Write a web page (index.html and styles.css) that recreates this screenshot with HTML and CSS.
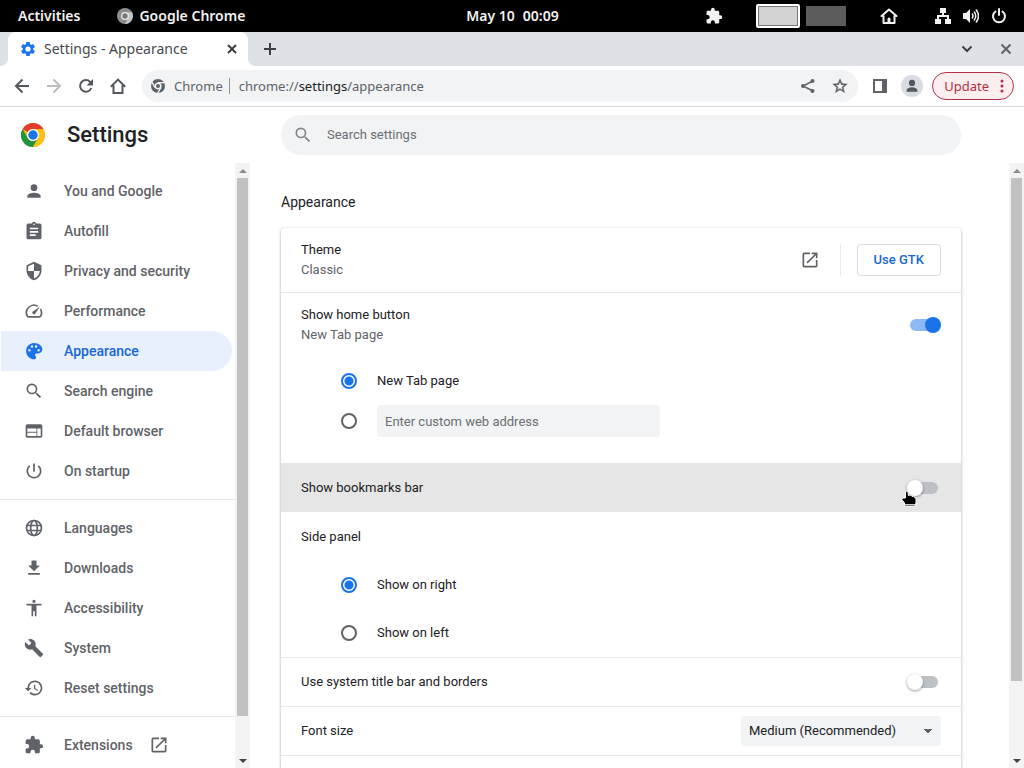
FILE: index.html
```html
<!DOCTYPE html>
<html lang="en">
<head>
<meta charset="utf-8">
<title>Settings - Appearance</title>
<link rel="stylesheet" href="styles.css">
</head>
<body>
<header class="topbar">
  <div class="topbar-left">
    <button class="topbar-btn">Activities</button>
    <button class="topbar-btn topbar-app">
      <svg class="i16" viewBox="0 0 24 24"><circle cx="12" cy="12" r="12" fill="#8e8e8e"/><path d="M12 6.500h10.500A12 12 0 0 1 12 24l5-9z" fill="#c4c4c4"/><path d="M12 24 1.800 6l5.500 9 4.700 3z" fill="#7d7d7d"/><circle cx="12" cy="12" r="6" fill="#e8e8e8"/><circle cx="12" cy="12" r="4" fill="#777"/></svg>
      Google Chrome
    </button>
  </div>
  <time class="clock"><span>May 10</span><span>00:09</span></time>
  <div class="topbar-right">
    <svg class="i18" viewBox="0 0 24 24" fill="currentColor"><path d="M20.500 11H19V7c0-1.100-.9-2-2-2h-4V3.500a2.500 2.500 0 0 0-5 0V5H4c-1.100 0-2 .9-2 2v3.800h1.500a2.700 2.700 0 0 1 0 5.400H2V20c0 1.100.9 2 2 2h3.800v-1.500a2.700 2.700 0 0 1 5.400 0V22H17c1.100 0 2-.9 2-2v-4h1.500a2.500 2.500 0 0 0 0-5z"/></svg>
    <div class="workspaces"><button class="workspace workspace-active" aria-label="Workspace 1"></button><button class="workspace" aria-label="Workspace 2"></button></div>
    <svg class="i18 tray-home" viewBox="0 0 18 18" fill="none" stroke="currentColor" stroke-width="2" stroke-linejoin="round" stroke-linecap="round"><path d="M1.500 9 9 2.500 16.500 9M3.500 9v7h11V9"/><path d="M7.500 16v-4a1.500 1.500 0 0 1 3 0v4z" fill="currentColor" stroke="none"/></svg>
    <div class="tray">
      <svg class="i16" viewBox="0 0 16 16" fill="currentColor"><path d="M5 0h6v5H9v2h5v4h2v5h-6v-5h2V9H4v2h2v5H0v-5h2V7h5V5H5z"/></svg>
      <svg class="i16" viewBox="0 0 16 16" fill="currentColor"><path d="M0 5h3l4-4v14l-4-4H0z"/><path d="M9 5.500q2 2.500 0 5M11 3.500q3.500 4.500 0 9M13 1.500q5 6.500 0 13" fill="none" stroke="currentColor" stroke-width="1.500"/></svg>
      <svg class="i16" viewBox="0 0 16 16" fill="none" stroke="currentColor" stroke-width="2" stroke-linecap="round"><path d="M8 1v6M4.500 3.500a6 6 0 1 0 7 0"/></svg>
    </div>
  </div>
</header>

<div class="tabstrip">
  <div class="tab">
    <svg class="i16 blue" viewBox="1 1 22 22" fill="currentColor"><path d="M19.140 12.940c.04-.3.060-.61.060-.94s-.02-.64-.07-.94l2.030-1.580a.5.5 0 0 0 .12-.61l-1.920-3.320a.49.49 0 0 0-.59-.22l-2.390.96a7 7 0 0 0-1.620-.94l-.36-2.540a.48.48 0 0 0-.48-.41h-3.840c-.24 0-.43.17-.47.410l-.36 2.540c-.59.240-1.130.570-1.620.940l-2.390-.96a.48.48 0 0 0-.59.220L2.740 8.870a.48.48 0 0 0 .12.610l2.030 1.580a6 6 0 0 0 0 1.880l-2.030 1.580a.5.5 0 0 0-.12.610l1.920 3.320c.12.220.370.290.590.220l2.390-.96c.5.380 1.030.7 1.620.940l.36 2.540c.05.240.240.410.480.410h3.840c.24 0 .44-.17.470-.41l.36-2.540a7 7 0 0 0 1.620-.94l2.390.96c.22.080.470 0 .59-.22l1.920-3.320a.48.48 0 0 0-.12-.61zM12 15.600a3.600 3.600 0 1 1 0-7.200 3.600 3.600 0 0 1 0 7.200z"/></svg>
    <span class="tab-title">Settings - Appearance</span>
    <button class="icon-btn" aria-label="Close tab"><svg class="i16" viewBox="0 0 16 16" stroke="#3c4043" stroke-width="2"><path d="m4 4 8 8m0-8-8 8"/></svg></button>
  </div>
  <button class="icon-btn new-tab" aria-label="New tab"><svg class="i16" viewBox="0 0 16 16" stroke="#3c4043" stroke-width="2"><path d="M8 2v12M2 8h12"/></svg></button>
  <div class="window-controls">
    <button class="icon-btn" aria-label="Search tabs"><svg class="i16" viewBox="0 0 16 16" fill="none" stroke="#3c4043" stroke-width="2"><path d="m3.500 5.500 4.500 4.500 4.500-4.500"/></svg></button>
    <button class="icon-btn" aria-label="Close window"><svg class="i16" viewBox="0 0 16 16" stroke="#5f6368" stroke-width="2"><path d="m3.500 3.500 9 9m0-9-9 9"/></svg></button>
  </div>
</div>

<div class="toolbar">
  <div class="nav-buttons">
    <button class="icon-btn" aria-label="Back"><svg class="i16" viewBox="0 0 16 16" fill="none" stroke="currentColor" stroke-width="2"><path d="M15 8H2m6.500-6.500L2 8l6.500 6.500"/></svg></button>
    <button class="icon-btn faded" aria-label="Forward"><svg class="i16" viewBox="0 0 16 16" fill="none" stroke="currentColor" stroke-width="2"><path d="M1 8h13M7.500 1.500 14 8l-6.500 6.500"/></svg></button>
    <button class="icon-btn" aria-label="Reload"><svg class="i16" viewBox="0 0 16 16" fill="none" stroke="currentColor" stroke-width="2"><path d="M13.300 10A5.800 5.800 0 1 1 12 3.800L14 6"/><path d="M15 1v6.500H8.500z" fill="currentColor" stroke="none"/></svg></button>
    <button class="icon-btn" aria-label="Home"><svg class="i16" viewBox="0 0 16 16" fill="none" stroke="currentColor" stroke-width="2"><path d="M3.500 7v8h9V7M.8 8.800 8 1.600l7.200 7.200"/></svg></button>
  </div>
  <div class="omnibox">
    <svg class="i16" viewBox="0 0 24 24"><circle cx="12" cy="12" r="10.500" fill="#5f6368"/><g stroke="#f1f3f4" stroke-width="2"><path d="M12 7h11M7.700 14.500 2.200 5M16.300 14.500 10.800 24"/></g><circle cx="12" cy="12" r="4.200" fill="#5f6368" stroke="#f1f3f4" stroke-width="2.400"/></svg>
    <span class="origin">Chrome</span>
    <div class="url" role="textbox" contenteditable="true" aria-label="Address">chrome://<b>settings</b>/appearance</div>
    <button class="icon-btn" aria-label="Share"><svg class="i16" viewBox="0 0 16 16" fill="currentColor"><path d="M13 3 3 8l10 5" fill="none" stroke="currentColor" stroke-width="1.500"/><circle cx="12.500" cy="3" r="2"/><circle cx="3" cy="8" r="2"/><circle cx="12.500" cy="13" r="2"/></svg></button>
    <button class="icon-btn" aria-label="Bookmark"><svg class="i16" viewBox="1 1 22 22" fill="currentColor" stroke="currentColor" stroke-width=".6"><path d="m22 9.240-7.190-.62L12 2 9.190 8.630 2 9.240l5.460 4.730L5.820 21 12 17.270 18.180 21l-1.630-7.030L22 9.240zM12 15.400l-3.760 2.270 1-4.280-3.320-2.880 4.380-.38L12 6.100l1.710 4.040 4.380.38-3.320 2.880 1 4.280L12 15.400z"/></svg></button>
  </div>
  <div class="toolbar-end">
    <button class="icon-btn" aria-label="Side panel"><svg class="i16" viewBox="0 0 16 16" fill="currentColor"><path d="M1 1h14v14H1zm2 2v10h7V3z" fill-rule="evenodd"/></svg></button>
    <button class="avatar" aria-label="Profile"><svg class="i16" viewBox="3 3 18 18" fill="currentColor"><path d="M12 12a3.500 3.500 0 1 0 0-7 3.500 3.500 0 0 0 0 7zm0 1.500c-2.700 0-6 1.200-6 3.500v1.500h12V17c0-2.300-3.300-3.500-6-3.500z"/></svg></button>
    <button class="update">Update<svg class="dots" viewBox="0 0 4 16" fill="currentColor"><circle cx="2" cy="3" r="1.500"/><circle cx="2" cy="8" r="1.500"/><circle cx="2" cy="13" r="1.500"/></svg></button>
  </div>
</div>

<div class="page">
  <div class="brand">
    <svg class="i24" viewBox="0 0 48 48"><circle cx="24" cy="24" r="24" fill="#fbc116"/><path d="M3.200 12A24 24 0 0 1 44.800 12H24A12 12 0 0 0 13.600 18z" fill="#e33b2e"/><path d="M3.200 12A24 24 0 0 0 24 48l10.400-18A12 12 0 0 1 13.600 30z" fill="#229342"/><path d="M44.800 12A24 24 0 0 1 24 48l10.400-18A12 12 0 0 0 24 12z" fill="#fbc116"/><circle cx="24" cy="24" r="12" fill="#fff"/><circle cx="24" cy="24" r="9.500" fill="#1a73e8"/></svg>
    <h1>Settings</h1>
  </div>
  <div class="search-wrap">
    <label class="search">
      <svg class="i20" viewBox="0 0 24 24" fill="currentColor"><path d="M15.500 14h-.79l-.28-.27A6.500 6.500 0 1 0 13.730 14.430l.27.280v.79l5 4.990L20.490 19zm-6 0a4.500 4.500 0 1 1 0-9 4.500 4.500 0 0 1 0 9z"/></svg>
      <input type="search" placeholder="Search settings" aria-label="Search settings">
    </label>
  </div>

  <div class="side">
    <nav class="menu">
      <a href="#people"><svg class="i20" viewBox="0 0 24 24"><path d="M12 12a4 4 0 1 0 0-8 4 4 0 0 0 0 8zm0 2c-2.670 0-8 1.340-8 4v2h16v-2c0-2.660-5.330-4-8-4z"/></svg>You and Google</a>
      <a href="#autofill"><svg class="i20" viewBox="0 0 24 24"><path d="M19 3h-4.180a3 3 0 0 0-5.640 0H5a2 2 0 0 0-2 2v15c0 1.100.9 2 2 2h14a2 2 0 0 0 2-2V5a2 2 0 0 0-2-2zm-7 0a1 1 0 1 1 0 2 1 1 0 0 1 0-2zm2 15H7v-2h7zm3-4H7v-2h10zm0-4H7V8h10z"/></svg>Autofill</a>
      <a href="#privacy"><svg class="i20" viewBox="0 0 24 24"><path d="M12 1 3 5v6c0 5.550 3.840 10.740 9 12 5.160-1.260 9-6.450 9-12V5zm0 10.990h7c-.53 4.120-3.280 7.790-7 8.940V12H5V6.300l7-3.110z"/></svg>Privacy and security</a>
      <a href="#performance"><svg class="i20" viewBox="0 0 24 24"><path d="m20.380 8.570-1.230 1.850a8 8 0 0 1-.22 7.580H5.070A8 8 0 0 1 15.580 6.850l1.850-1.230A10 10 0 0 0 3.350 19a2 2 0 0 0 1.720 1h13.850a2 2 0 0 0 1.740-1 10 10 0 0 0-.27-10.440zm-9.790 6.840a2 2 0 0 0 2.830 0l5.660-8.490-8.490 5.660a2 2 0 0 0 0 2.830z"/></svg>Performance</a>
      <a href="#appearance" class="selected" aria-current="page"><svg class="i20" viewBox="0 0 24 24"><path d="M12 2.500C6.500 2.500 2.500 7 2.500 12s4 10 9.500 10c1.500 0 2.500-1 2.500-2.300 0-.6-.2-1.100-.6-1.500-.4-.5-.6-1-.6-1.500 0-1 .8-1.700 1.700-1.700h2c3 0 5-2.300 5-5C22 6 17.500 2.500 12 2.500zM6.500 12.500a1.500 1.500 0 1 1 0-3 1.500 1.500 0 0 1 0 3zm3-4.500a1.500 1.500 0 1 1 0-3 1.500 1.500 0 0 1 0 3zm5 0a1.500 1.500 0 1 1 0-3 1.500 1.500 0 0 1 0 3zm3 4.500a1.500 1.500 0 1 1 0-3 1.500 1.500 0 0 1 0 3z"/></svg>Appearance</a>
      <a href="#search"><svg class="i20" viewBox="0 0 24 24"><path d="M15.500 14h-.79l-.28-.27A6.500 6.500 0 1 0 13.730 14.430l.27.280v.79l5 4.990L20.490 19zm-6 0a4.500 4.500 0 1 1 0-9 4.500 4.500 0 0 1 0 9z"/></svg>Search engine</a>
      <a href="#browser"><svg class="i20" viewBox="0 0 24 24"><path d="M20 4H4a2 2 0 0 0-2 2v12c0 1.100.9 2 2 2h16a2 2 0 0 0 2-2V6a2 2 0 0 0-2-2zm-5 14H4v-4h11zm0-5H4V9h11zm5 5h-4V9h4z"/></svg>Default browser</a>
      <a href="#startup"><svg class="i20" viewBox="0 0 24 24"><path d="M13 3h-2v10h2zm4.830 2.170-1.420 1.420A6.920 6.920 0 0 1 19 12a7 7 0 1 1-11.420-5.420L6.170 5.170A9 9 0 1 0 21 12a8.930 8.930 0 0 0-3.170-6.830z"/></svg>On startup</a>
      <hr>
      <a href="#languages"><svg class="i20" viewBox="0 0 24 24"><g fill="none" stroke="currentColor" stroke-width="2"><circle cx="12" cy="12" r="9"/><ellipse cx="12" cy="12" rx="4" ry="9"/><path d="M3.500 9h17M3.500 15h17"/></g></svg>Languages</a>
      <a href="#downloads"><svg class="i20" viewBox="0 0 24 24"><path d="M19 9h-4V3H9v6H5l7 7zM5 18v2h14v-2z"/></svg>Downloads</a>
      <a href="#accessibility"><svg class="i20" viewBox="0 0 24 24"><path d="M12 2a2 2 0 1 1 0 4 2 2 0 0 1 0-4zm9 7h-6v13h-2v-6h-2v6H9V9H3V7h18z"/></svg>Accessibility</a>
      <a href="#system"><svg class="i20" viewBox="0 0 24 24"><path d="m22.700 19-9.100-9.100c.9-2.300.4-5-1.500-6.900-2-2-5-2.400-7.400-1.300L9 6 6 9 1.600 4.700C.4 7.100.9 10.100 2.900 12.100c1.900 1.900 4.600 2.400 6.900 1.500l9.100 9.100c.4.400 1 .4 1.400 0l2.300-2.300c.5-.4.5-1.100.1-1.400z"/></svg>System</a>
      <a href="#reset"><svg class="i20" viewBox="0 0 24 24"><path d="M13 3a9 9 0 0 0-9 9H1l3.890 3.890.07.140L9 12H6a7 7 0 1 1 2.060 4.940l-1.420 1.420A9 9 0 1 0 13 3zm-1 5v5l4.280 2.540.72-1.210-3.500-2.080V8z"/></svg>Reset settings</a>
      <hr>
      <a href="#extensions"><svg class="i20" viewBox="0 0 24 24"><path d="M20.500 11H19V7c0-1.100-.9-2-2-2h-4V3.500a2.500 2.500 0 0 0-5 0V5H4c-1.100 0-2 .9-2 2v3.800h1.500a2.700 2.700 0 0 1 0 5.400H2V20c0 1.100.9 2 2 2h3.800v-1.500a2.700 2.700 0 0 1 5.400 0V22H17c1.100 0 2-.9 2-2v-4h1.500a2.500 2.500 0 0 0 0-5z"/></svg>Extensions<svg class="i20" viewBox="0 0 24 24"><path d="M19 19H5V5h7V3H5a2 2 0 0 0-2 2v14c0 1.100.9 2 2 2h14a2 2 0 0 0 2-2v-7h-2zM14 3v2h3.590l-9.830 9.830 1.410 1.410L19 6.410V10h2V3z"/></svg></a>
    </nav>
    <div class="scrollbar scrollbar-menu" aria-hidden="true"><i class="arrow up"></i><div class="track"><div class="thumb"></div></div><i class="arrow down"></i></div>
  </div>

  <div class="main-area">
    <main>
      <h2>Appearance</h2>
      <div class="card">
        <div class="row two-line">
          <div class="labels"><span>Theme</span><span class="secondary">Classic</span></div>
          <button class="icon-btn grey" aria-label="Open theme store"><svg class="i20" viewBox="0 0 24 24" fill="currentColor"><path d="M19 19H5V5h7V3H5a2 2 0 0 0-2 2v14c0 1.100.9 2 2 2h14a2 2 0 0 0 2-2v-7h-2zM14 3v2h3.590l-9.830 9.830 1.410 1.410L19 6.410V10h2V3z"/></svg></button>
          <span class="divider"></span>
          <button class="outline-btn">Use GTK</button>
        </div>
        <div class="row two-line line">
          <label class="labels" for="home"><span>Show home button</span><span class="secondary">New Tab page</span></label>
          <input class="toggle" type="checkbox" id="home" checked>
        </div>
        <div class="home-options">
          <label class="option"><input type="radio" name="homepage" checked>New Tab page</label>
          <div class="option"><input type="radio" name="homepage" aria-label="Custom web address"><input class="field" type="text" placeholder="Enter custom web address" aria-label="Custom web address"></div>
        </div>
        <div class="row line hovered">
          <label class="labels" for="bookmarks">Show bookmarks bar</label>
          <span class="toggle-wrap"><input class="toggle" type="checkbox" id="bookmarks">
          <svg class="pointer" viewBox="0 0 17 17"><path d="M4.500 1Q6.500.5 7 2.500L7.500 6l1-1 2 .5.500 1 1.500-.5 1 1.500 1.500.5v5l-1 3H3.500v-3L.8 9.500 1.500 8H4.500z" fill="#000" stroke="#fff" stroke-linejoin="round"/><path d="M3.500 14.500h11" stroke="#fff" stroke-width=".8"/></svg></span>
        </div>
        <div class="row line" id="panel-label">Side panel</div>
        <div class="side-options" role="radiogroup" aria-labelledby="panel-label">
          <label class="option"><input type="radio" name="panel" checked>Show on right</label>
          <label class="option"><input type="radio" name="panel">Show on left</label>
        </div>
        <div class="row line">
          <label class="labels" for="titlebar">Use system title bar and borders</label>
          <input class="toggle" type="checkbox" id="titlebar">
        </div>
        <div class="row line">
          <label class="labels" for="font-size">Font size</label>
          <select id="font-size"><option>Medium (Recommended)</option></select>
        </div>
        <div class="row line"></div>
      </div>
    </main>
    <div class="scrollbar scrollbar-main" aria-hidden="true"><i class="arrow up"></i><div class="track"><div class="thumb"></div></div><i class="arrow down"></i></div>
  </div>
</div>
</body>
</html>
```

FILE: styles.css
```css
* { box-sizing: border-box; }

body {
  margin: 0;
  height: 100vh;
  display: flex;
  flex-direction: column;
  overflow: hidden;
  background: #fff;
  color: #202124;
  font: 13px/20px Roboto, sans-serif;
}

button, input, select { font: inherit; color: inherit; margin: 0; }
button { border: 0; padding: 0; background: none; }
svg { display: block; flex: none; }
.i16 { width: 16px; height: 16px; }
.i18 { width: 18px; height: 18px; }
.i20 { width: 20px; height: 20px; }
.i24 { width: 24px; height: 24px; }
.blue { color: #1a73e8; }
.grey { color: #5f6368; }

/* Desktop bar */
.topbar {
  flex: none;
  height: 32px;
  padding: 0 17px 0 18px;
  display: grid;
  grid-template-columns: 1fr auto 1fr;
  align-items: center;
  background: #000;
  color: #f2f2f2;
  font: 600 14px/20px "Noto Sans", sans-serif;
}
.topbar-left, .topbar-right, .topbar-app, .tray, .workspaces { display: flex; align-items: center; }
.topbar-left { gap: 37px; }
.topbar-app { gap: 6px; }
.clock { display: flex; gap: 8px; }
.topbar-right { justify-content: flex-end; }
.workspaces { margin: 0 34px 0 33px; gap: 6px; }
.workspace { width: 40px; height: 20px; background: #5c5c5c; }
.workspace-active { width: 44px; height: 24px; border: 2px solid #fff; border-radius: 2px; background: #d3d3d3; box-shadow: inset 0 0 0 1px #777; }
.tray { gap: 12px; margin-left: 37px; }

/* Tabs */
.tabstrip { flex: none; height: 34px; padding: 0 10px 0 8px; display: flex; align-items: center; background: #dee1e6; }
.tab {
  position: relative;
  width: 240px;
  height: 34px;
  padding: 0 8px 0 12px;
  display: flex;
  align-items: center;
  gap: 8px;
  border-radius: 8px 8px 0 0;
  background: #fff;
  color: #45494d;
  font: 14px/20px "Noto Sans", sans-serif;
}
.tab::before, .tab::after { content: ""; position: absolute; bottom: 0; width: 8px; height: 8px; }
.tab::before { left: -8px; background: radial-gradient(circle at 0 0, transparent 8px, #fff 8px); }
.tab::after { right: -8px; background: radial-gradient(circle at 100% 0, transparent 8px, #fff 8px); }
.tab-title { flex: 1; white-space: nowrap; }
.new-tab { margin-left: 14px; }
.window-controls { margin-left: auto; display: flex; gap: 23px; }

/* Toolbar */
.toolbar {
  flex: none;
  height: 41px;
  padding: 0 10px 0 14px;
  display: flex;
  align-items: center;
  border-bottom: 1px solid #d9dcde;
  color: #5f6368;
  font: 13px/20px "Noto Sans", sans-serif;
}
.nav-buttons { display: flex; gap: 16px; margin-right: 16px; color: #54585c; }
.faded { color: #babcbe; }
.omnibox { flex: 1; height: 32px; padding: 0 10px 0 8px; display: flex; align-items: center; border-radius: 16px; background: #f1f3f4; }
.origin { padding: 0 6px 0 8px; line-height: 16px; border-right: 1px solid #8d9194; }
.url { flex: 1; padding-left: 9px; outline: 0; white-space: nowrap; }
.url b { color: #202124; font-weight: 400; }
.omnibox .icon-btn + .icon-btn { margin-left: 16px; }
.toolbar-end { display: flex; align-items: center; margin-left: 14px; }
.avatar { margin: 0 9px 0 13px; width: 22px; height: 22px; padding: 3px; border-radius: 50%; background: #d8dce2; color: #54585c; }
.update {
  height: 28px;
  padding: 0 9px 0 11px;
  display: flex;
  align-items: center;
  gap: 11px;
  border: 1px solid #b3314a;
  border-radius: 14px;
  background: #fbeeee;
  color: #b52d43;
}
.dots { width: 4px; height: 16px; }

/* Settings page */
.page { flex: 1; min-height: 0; display: grid; grid-template: 56px minmax(0, 1fr) / 250px minmax(0, 1fr); }
.brand { display: flex; align-items: center; gap: 22px; padding-left: 21px; }
h1 { margin: 0; font-size: 22px; line-height: 28px; font-weight: 500; }
.search-wrap { padding: 8px 63px 8px 31px; }
.search { display: flex; align-items: center; gap: 14px; height: 40px; padding: 0 12px; border-radius: 20px; background: #f1f3f4; color: #80868b; }
.search input { flex: 1; min-width: 0; border: 0; padding: 0; outline: 0; background: none; }
::placeholder { color: #6b6f73; opacity: 1; }

.side, .main-area { display: flex; min-height: 0; overflow: hidden; }
.menu { flex: 1; padding-top: 8px; overflow: hidden; font-size: 14px; font-weight: 500; }
.menu a { height: 40px; margin: 0 3px 0 1px; padding-left: 23px; display: flex; align-items: center; gap: 20px; color: #5f6368; text-decoration: none; white-space: nowrap; }
.menu svg { fill: currentColor; }
.menu a svg:last-child:not(:first-child) { margin-left: -4px; }
.menu .selected { background: #e8f0fe; color: #1967d2; border-radius: 0 20px 20px 0; }
.menu .selected svg { color: #1a73e8; }
.menu hr { height: 1px; margin: 8px 0; border: 0; background: #e8eaed; }

.scrollbar { flex: none; width: 15px; display: flex; flex-direction: column; background: #f3f3f3; }
.arrow { height: 15px; flex: none; display: grid; place-items: center; }
.arrow::before { content: ""; border: 4px solid transparent; }
.up::before { border-top: 0; border-bottom-color: #8b8b8b; }
.down::before { border-bottom: 0; border-top-color: #444; }
.track { flex: 1; padding: 0 2px; }
.thumb { background: #c1c1c1; }
.scrollbar-menu .thumb { height: 93.5%; }
.scrollbar-main .thumb { height: 87.5%; }

main { flex: 1; min-width: 0; display: flex; flex-direction: column; padding: 0 48px 0 31px; }
h2 { margin: 29px 0 16px; font-size: 14px; line-height: 20px; font-weight: 400; }
.card { flex: 1 0 auto; border-radius: 4px; background: #fff; box-shadow: 0 1px 2px rgba(60, 64, 67, .3), 0 1px 3px 1px rgba(60, 64, 67, .15); }
.row { min-height: 48px; padding: 0 20px; display: flex; align-items: center; }
.two-line { min-height: 64px; }
.line { min-height: 49px; border-top: 1px solid #e8eaed; }
.two-line.line { min-height: 65px; }
.labels { flex: 1; display: flex; flex-direction: column; }
.secondary { color: #5f6368; }
.divider { width: 1px; height: 32px; margin: 0 16px 0 20px; background: #e8eaed; }
.outline-btn { height: 32px; padding: 0 16px; border: 1px solid #dadce0; border-radius: 4px; color: #1967d2; font-weight: 500; }

.toggle { appearance: none; display: block; position: relative; width: 34px; height: 16px; }
.toggle::before { content: ""; position: absolute; inset: 2px 3px; border-radius: 6px; background: #bdc1c6; }
.toggle::after { content: ""; position: absolute; left: 0; top: 0; width: 16px; height: 16px; border-radius: 50%; background: #fff; box-shadow: 0 1px 3px rgba(0, 0, 0, .4); }
.toggle:checked::before { background: #8cb8f3; }
.toggle:checked::after { left: 18px; background: #1a73e8; box-shadow: none; }
.toggle-wrap { position: relative; }
.pointer { position: absolute; left: -6px; top: 10px; width: 17px; height: 17px; }

.home-options { padding: 4px 0 22px 60px; }
.home-options .option { height: 40px; }
.side-options { padding-left: 60px; }
.option { height: 48px; display: flex; align-items: center; gap: 20px; }
.option input[type="radio"] { appearance: none; width: 16px; height: 16px; border: 2px solid #5f6368; border-radius: 50%; }
.option input[type="radio"]:checked { border-color: #1a73e8; background: radial-gradient(circle, #1a73e8 4px, #fff 5px); }
.field { width: 283px; height: 32px; padding: 0 8px; border: 0; border-radius: 4px; background: #f1f3f4; }
.hovered { background: #e6e6e6; border-color: #e6e6e6; }
.hovered + .line { border-color: #fff; }

select {
  appearance: none;
  width: 200px;
  height: 30px;
  padding: 0 28px 0 8px;
  border: 0;
  border-radius: 4px;
  background:
    conic-gradient(from 315deg at 50% 100%, #5f6368 90deg, transparent 0) right 8px center / 10px 5px no-repeat,
    #f1f3f4;
}
```
